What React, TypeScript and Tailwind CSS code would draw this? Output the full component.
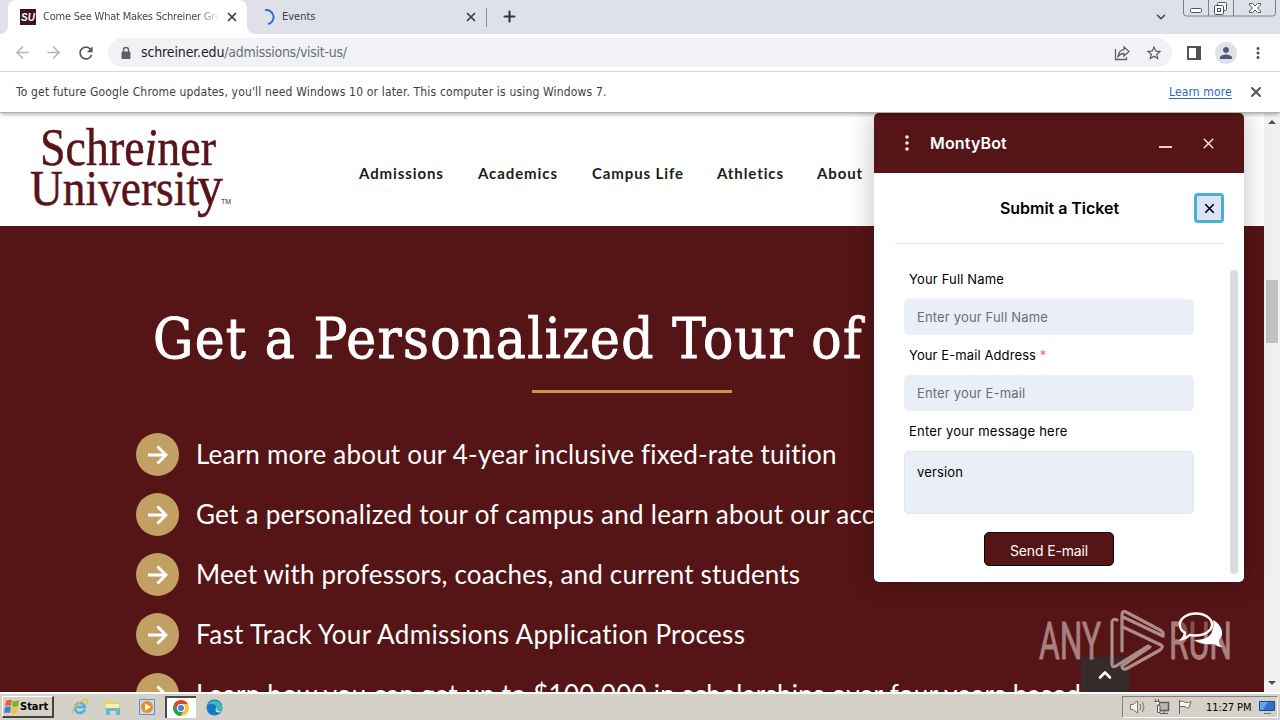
import { ArrowLeft, ArrowRight, ChevronDown, ChevronUp, Plus, X } from 'lucide-react';
import { MdMoreVert, MdPerson, MdRefresh, MdStarBorder } from 'react-icons/md';

const NAV = [
  { label: 'Admissions', width: 'w-[85px]' },
  { label: 'Academics', width: 'w-[80px]' },
  { label: 'Campus Life', width: 'w-[91px]' },
  { label: 'Athletics', width: 'w-[66px]' },
  { label: 'About', width: 'w-[46px]' },
];

const ITEMS = [
  { text: 'Learn more about our 4-year inclusive fixed-rate tuition', spacing: 'tracking-[0.2px]' },
  { text: 'Get a personalized tour of campus and learn about our accredited programs', spacing: 'tracking-[0.28px]' },
  { text: 'Meet with professors, coaches, and current students', spacing: 'tracking-[0.18px]' },
  { text: 'Fast Track Your Admissions Application Process', spacing: 'tracking-[0.35px]' },
  { text: 'Learn how you can get up to $100,000 in scholarships over four years based', spacing: 'tracking-[0.28px]' },
];

function TabStrip() {
  return (
    <div className="flex h-[34px] shrink-0 bg-[#dee1e9]">
      <div className="w-2 bg-white">
        <div className="h-full w-2 rounded-br-lg bg-[#dee1e9]" />
      </div>
      <div className="flex w-[239px] items-center rounded-t-lg bg-white pl-3">
        <div className="flex h-4 w-4 items-center justify-center bg-[#43121a] font-['Liberation_Sans'] text-[10px] font-bold italic text-white">
          SU
        </div>
        <div className="ml-[7px] w-[176px] overflow-hidden whitespace-nowrap bg-gradient-to-r from-[#3c4043] from-88% to-transparent bg-clip-text text-[11px] tracking-[-0.21px] text-transparent">
          Come See What Makes Schreiner Great
        </div>
        <X size={14} strokeWidth={3} className="ml-1.5 text-[#3c4043]" />
      </div>
      <div className="w-2 bg-white">
        <div className="h-full w-2 rounded-bl-lg bg-[#dee1e9]" />
      </div>
      <div className="flex w-[231px] items-center pl-[5px]">
        <svg width="16" height="16" viewBox="0 0 16 16" fill="none">
          <path d="M5 1.2A7 7 0 1 1 8 15" stroke="#2f6fd0" strokeWidth="2" />
        </svg>
        <div className="ml-1.5 w-[182px] text-[11px] text-[#3c4043]">Events</div>
        <X size={14} strokeWidth={3} className="text-[#3c4043]" />
      </div>
      <div className="mt-2 h-[19px] w-px bg-[#8a8d94]" />
      <Plus size={17} strokeWidth={3} className="ml-3.5 mt-2 text-[#33363b]" />
      <div className="flex flex-1 items-start justify-end">
        <ChevronDown size={14} strokeWidth={2.8} className="mr-[15px] mt-2.5 text-[#45484c]" />
        <svg width="97" height="17" viewBox="0 0 97 17" fill="none" stroke="#7c8088">
          <path d="M.5 0v13q0 3 3 3h86q3 0 3-3V0M25.500 0v16M50.500 0v16" />
          <rect x="7.500" y="8.500" width="11" height="4" rx="1" fill="#fff" stroke="#50535a" />
          <rect x="34.500" y="2.500" width="9" height="8" rx="1" fill="#fff" stroke="#50535a" />
          <rect x="31.500" y="5.500" width="9" height="9" rx="1" fill="#fff" stroke="#50535a" />
          <rect x="34.500" y="8.500" width="3" height="3" stroke="#50535a" />
          <path d="M66.500 3.500h3l2.500 2.500 2.500-2.500h3v1.500l-3 3 3 3v1.500h-3L72 10l-2.500 2.500h-3V11l3-3-3-3z" fill="#fff" stroke="#50535a" />
        </svg>
      </div>
    </div>
  );
}

function Toolbar() {
  return (
    <div className="flex h-[38px] shrink-0 items-center border-b border-[#d5d7da] bg-white">
      <ArrowLeft size={19} className="ml-[13px] text-[#b4b5b7]" />
      <ArrowRight size={19} className="ml-3 text-[#b4b5b7]" />
      <MdRefresh size={20} className="ml-[13px] text-[#55585c]" />
      <div className="ml-3 flex h-[29px] flex-1 items-center rounded-full bg-[#f0f2f5]">
        <svg width="14" height="14" viewBox="0 0 14 14" className="ml-[11px]">
          <path d="M3 6h8v6.500H3z" fill="#5f6368" stroke="#5f6368" strokeLinejoin="round" />
          <path d="M4.500 6V4a2.500 2.500 0 0 1 5 0v2" fill="none" stroke="#5f6368" strokeWidth="1.400" />
        </svg>
        <div className="ml-2 text-[14px] tracking-[-0.27px] text-[#6b6f74]">
          <span className="tracking-[-0.13px] text-[#202124]">schreiner.edu</span>/admissions/visit-us/
        </div>
        <div className="flex-1" />
        <svg width="16" height="16" viewBox="0 0 16 16" fill="none" stroke="#5f6368" strokeWidth="1.300">
          <path d="M1.500 4v10.500h11V12" />
          <path d="M10 2l5 4.500-5 4.500V8.500C7 8.500 5.500 9.500 4 11.500 4.500 7.500 6.500 5 10 4.700z" />
        </svg>
        <MdStarBorder size={18} className="ml-[15px] mr-[9px] text-[#55585c]" />
      </div>
      <div className="ml-[15px] h-[14px] w-[14px] border-2 border-r-[5px] border-[#505357]" />
      <div className="ml-3.5 flex h-[22px] w-[22px] items-center justify-center rounded-full bg-[#dfe1e8]">
        <MdPerson size={18} className="text-[#4f5a78]" />
      </div>
      <MdMoreVert size={18} className="ml-3 mr-[13px] text-[#505357]" />
    </div>
  );
}

function UpdateNotice() {
  return (
    <div className="relative z-20 flex h-[41px] shrink-0 items-center border-b border-[#aeb0b2] bg-white pl-4 text-[12px] shadow-[0_3px_3px_-1px_rgba(0,0,0,0.25)]">
      <div className="flex-1 whitespace-nowrap tracking-[0.165px] text-[#3c4043]">
        To get future Google Chrome updates, you'll need Windows 10 or later. This computer is using Windows 7.
      </div>
      <div className="w-[63px] whitespace-nowrap tracking-[0.12px] text-[#2f66b8] underline underline-offset-2">Learn more</div>
      <X size={16} strokeWidth={2.8} className="ml-4 mr-4 text-[#505357]" />
    </div>
  );
}

function SiteHeader() {
  return (
    <header className="flex h-[113px] items-center bg-white">
      <svg
        width="210"
        height="113"
        viewBox="0 0 210 113"
        className="ml-[25px] font-['Liberation_Serif']"
        fill="#5a1419"
        stroke="#5a1419"
        strokeWidth="0.5"
      >
        <text x="15" y="52" fontSize="52" textLength="176" lengthAdjust="spacingAndGlyphs">
          Schre<tspan fontStyle="italic">i</tspan>ner
        </text>
        <text x="5" y="92" fontSize="50" textLength="169" lengthAdjust="spacingAndGlyphs">Universit</text>
        <text x="172" y="92" fontSize="58" textLength="26" lengthAdjust="spacingAndGlyphs">y</text>
        <text x="196" y="91" fontSize="7" fontFamily="Liberation Sans" strokeWidth="0">TM</text>
      </svg>
      <nav className="ml-[124px] mt-[7px] flex gap-[34px] font-['Lato'] text-[15px] font-bold tracking-[0.9px] text-[#1c1c1c]">
        {NAV.map((item) => (
          <a key={item.label} className={`${item.width} whitespace-nowrap`}>
            {item.label}
          </a>
        ))}
      </nav>
    </header>
  );
}

function TourSection() {
  return (
    <section className="h-[466px] overflow-hidden bg-[#551415] text-white">
      <h1 className="ml-[153px] mt-[73px] h-[80px] whitespace-nowrap font-['DejaVu_Serif_Condensed','DejaVu_Serif'] text-[56px] leading-[80px] tracking-[1.38px] [-webkit-text-stroke:0.9px_white]">
        Get a Personalized Tour of
      </h1>
      <div className="ml-[532px] mt-[11px] h-[3px] w-[200px] bg-[#c8944a]" />
      <ul className="ml-[136px] mt-10 flex flex-col gap-[17px]">
        {ITEMS.map((item) => (
          <li key={item.text} className="flex h-[43px] items-center gap-[17px]">
            <span className="flex h-[43px] w-[43px] shrink-0 items-center justify-center rounded-full bg-[#c2a063]">
              <svg width="20" height="20" viewBox="0 0 20 20" fill="none" stroke="#fff" strokeWidth="3">
                <path d="M0 10h18M9.500 1.500l8.500 8.500-8.500 8.500" />
              </svg>
            </span>
            <span className={`${item.spacing} whitespace-nowrap font-['Lato'] text-[26px]`}>{item.text}</span>
          </li>
        ))}
      </ul>
    </section>
  );
}

function PageScrollbar() {
  return (
    <div className="flex w-4 shrink-0 flex-col items-center bg-[#f1f1f1]">
      <svg width="8" height="4" viewBox="0 0 8 4" className="mt-[7px]">
        <path d="M0 4l4-4 4 4z" fill="#505050" />
      </svg>
      <div className="mt-[156px] h-[63px] w-3 bg-[#c1c1c1]" />
      <svg width="8" height="4" viewBox="0 0 8 4" className="mb-[7px] mt-auto">
        <path d="M0 0l4 4 4-4z" fill="#505050" />
      </svg>
    </div>
  );
}

function ChatPanel() {
  return (
    <div className="absolute left-[874px] top-0 z-20 h-[469px] w-[370px] overflow-hidden rounded-[5px] bg-white font-['Inter'] text-black shadow-[0_0_28px_rgba(0,0,0,0.25)]">
      <div className="flex h-[60px] items-center bg-[#551415] text-[#fbeeee]">
        <svg width="4" height="16" viewBox="0 0 4 16" fill="currentColor" className="ml-[31px]">
          <circle cx="2" cy="2" r="1.800" />
          <circle cx="2" cy="8" r="1.800" />
          <circle cx="2" cy="14" r="1.800" />
        </svg>
        <div className="ml-[21px] flex-1 text-[16px] font-semibold tracking-[0.15px] text-white">MontyBot</div>
        <div className="mt-2 h-0.5 w-[13px] bg-[#f3cfcb]" />
        <X size={17} className="ml-[28px] mr-[27px]" />
      </div>
      <div className="ml-[21px] mr-5 flex h-[71px] items-center border-b border-[#dfe1e4]">
        <div className="ml-[105px] flex-1 whitespace-nowrap text-[16px] font-semibold tracking-[-0.04px]">Submit a Ticket</div>
        <button className="flex h-[30px] w-[30px] items-center justify-center rounded-[4px] border-[3px] border-[#45b3c9] bg-[#dfe2f6]">
          <X size={15} strokeWidth={2.8} />
        </button>
      </div>
      <div className="flex">
        <form className="ml-[30px] mt-[25px] w-[290px] text-[13px] tracking-[0.16px]">
          <label className="block h-[30px] pl-[5px] leading-[21px]">Your Full Name</label>
          <div className="h-9 rounded-[5px] bg-[#e9eef7] pl-[13px] leading-9 text-[#686d7b]">Enter your Full Name</div>
          <label className="mt-[10px] block h-[30px] pl-[5px] leading-[21px] tracking-[0.1px]">
            Your E-mail Address <span className="text-[#ef6a6a]">*</span>
          </label>
          <div className="h-9 rounded-[5px] bg-[#e9eef7] pl-[13px] leading-9 text-[#686d7b]">Enter your E-mail</div>
          <label className="mt-[10px] block h-[30px] pl-[5px] leading-[21px] tracking-[0.22px]">Enter your message here</label>
          <div className="h-[63px] rounded-[5px] border border-[#e1e6e9] bg-[#e9eef7] pl-3 pt-[10px] leading-5">version</div>
          <button type="button" className="mx-auto mt-[18px] block h-[34px] w-[130px] rounded-[5px] border border-[#150304] bg-[#551415] pt-0.5 text-[14px] tracking-[-0.15px] text-white">
            Send E-mail
          </button>
        </form>
        <div className="ml-9 mt-[26px] h-[304px] w-2 rounded bg-[#d8dde2]" />
      </div>
    </div>
  );
}

function FloatingControls() {
  return (
    <>
      <div className="absolute left-[1081px] top-[544px] flex h-[35px] w-12 items-center justify-center bg-[#352b2b]">
        <ChevronUp size={20} strokeWidth={3.2} className="text-white" />
      </div>
      <svg width="200" height="70" viewBox="0 0 200 70" className="absolute left-[1035px] top-[492px] font-['Roboto']">
        <g fill="#a97f7f" stroke="#a97f7f" fontSize="52">
          <text x="4" y="54" textLength="62" lengthAdjust="spacingAndGlyphs">ANY</text>
          <text x="134" y="54" textLength="63" lengthAdjust="spacingAndGlyphs">RUN</text>
        </g>
        <g fill="none" stroke="#b08b8a" strokeWidth="3.200" strokeLinejoin="round" strokeLinecap="round">
          <path d="M82 15q-5-2-5 3v41q0 4 4 2l32-20" />
          <path d="M87 46V10q0-5 4-3l34 18q4 2 3 6L88 12" />
          <path d="M88 22l38 18q3 2-1 5L91 64q-4 1-4-3l28-19" />
        </g>
        <path d="M178 15c6 3 10 9 9 15-1 3-3 4-3 5 0 3 1 5 3 7-4 0-6-2-8-3-7 1-15 0-20-4 10 0 16-3 18-8 2-4 2-8 1-12z" fill="#fff" />
        <path
          d="M161 8.500c9 0 16 5 16 11s-7 11-16 11c-2 0-4 0-6-.6-2 2-5 3.600-8 4.100 2-2 3-4 2.800-6.200-3.300-2.200-5-5-5-8.300 0-6 7.200-11 16.200-11z"
          fill="#551415"
          fillOpacity=".4"
          stroke="#fff"
          strokeWidth="2.400"
        />
      </svg>
    </>
  );
}

function Taskbar() {
  return (
    <footer className="z-30 flex h-7 shrink-0 items-center border-t-2 border-white bg-[#d5d1c8] text-black">
      <div className="ml-0.5 flex h-[22px] w-[52px] items-center border-b-2 border-r-2 border-b-[#46433f] border-r-[#46433f] border-l border-t border-l-white border-t-white">
        <svg width="16" height="16" viewBox="0 0 16 16" className="ml-px shrink-0">
          <path d="M2 2q3-2 6-1L7 7Q4 6 1 7z" fill="#e5652b" />
          <path d="M9 2q3 1 6-1l-1 6q-3 2-6 0z" fill="#70b52b" />
          <path d="M1 8q3-1 6 0l-1 6q-3-1-6 0z" fill="#3a85d2" />
          <path d="M8 8q3 2 6 0l-1 6q-3 2-6 0z" fill="#efc530" />
        </svg>
        <span className="pt-0.5 text-[11px] font-bold">Start</span>
      </div>
      <svg width="18" height="18" viewBox="0 0 18 18" className="ml-[17px]" fill="none">
        <path d="M14 11.500q-2 3.500-5.500 3.500A5 5 0 1 1 14 9H5" stroke="#4db0e2" strokeWidth="2.600" />
        <path d="M2 15Q0 12 7 6t9-4-1 4" stroke="#e5bd3c" strokeWidth="1.400" />
      </svg>
      <svg width="18" height="18" viewBox="0 0 18 18" className="ml-[15px]">
        <path d="M1 2h6l1 2h8v9H1z" fill="#e7cd73" />
        <path d="M2 6h13v4H2z" fill="#f9efb2" />
        <path d="M2 10h14v7h-4v-4H6v4H2z" fill="#69b6d5" />
      </svg>
      <svg width="18" height="18" viewBox="0 0 18 18" className="ml-4">
        <path d="M1.500 1.500h15v15h-15z" fill="#c4dcf0" stroke="#5795cc" />
        <circle cx="9" cy="9" r="6" fill="#ef8c1e" />
        <path d="M7 5.500l6 3.500-6 3.500z" fill="#fff" />
      </svg>
      <div className="ml-[9px] flex h-[22px] w-[31px] items-center justify-center border-l-2 border-t-2 border-l-[#4c4a46] border-t-[#4c4a46] bg-white">
        <svg width="16" height="16" viewBox="0 0 16 16" className="mr-0.5">
          <circle cx="8" cy="8" r="8" fill="#f5c62f" />
          <path d="M1.100 4A8 8 0 0 1 14.900 4H8L4.500 10z" fill="#dc4437" />
          <path d="M1.100 4A8 8 0 0 0 7.500 16l3.500-6H4.500z" fill="#2f9d57" />
          <circle cx="8" cy="8" r="4" fill="#fff" />
          <circle cx="8" cy="8" r="3" fill="#3d7ee8" />
        </svg>
      </div>
      <svg width="17" height="17" viewBox="0 0 17 17" className="ml-2.5">
        <circle cx="8.500" cy="8.500" r="8" fill="#1679c5" />
        <path d="M1 7A8 8 0 0 1 16.500 9q0 3-4 3-3 0-2-2Q11 6 7 5 3 4 1 7z" fill="#36c1b4" />
        <path d="M10.500 8q.5 2 0 3 1 2 5.500 1-1.500 1.500-4 1.500-4-1-1.500-5.500z" fill="#e4f3f6" />
      </svg>
      <div className="ml-auto mr-0.5 flex h-[22px] w-[156px] items-center border border-b-white border-l-[#858178] border-r-white border-t-[#858178]">
        <svg width="17" height="16" viewBox="0 0 17 16" className="ml-1.5 shrink-0" fill="#f6f5f2" stroke="#77756f">
          <path d="M1.500 5.500H4L8.500 2v12L4 10.500H1.500z" />
          <path d="M11 5q2 3 0 6M13.500 3q3 5 0 10" fill="none" />
        </svg>
        <svg width="17" height="16" viewBox="0 0 17 16" className="ml-[7px] shrink-0" fill="#f6f5f2" stroke="#5e5c57">
          <path d="M5.500 3.500h10v8h-10z" fill="#b9b7b1" strokeWidth="1.500" />
          <path d="M7 14.500h8M11 12v2" />
          <path d="M1.500 2.500h5v4h-2v7h2.500v-7M2.500 0v2M5.500 0v2" />
        </svg>
        <svg width="16" height="16" viewBox="0 0 16 16" className="ml-[7px] shrink-0" fill="#f6f5f2" stroke="#69665f">
          <path d="M2.500 1v14M3 2.500c4-1 4 1 6 1s3 0 5-1l-2 6c-2 1-3 0-4-1H3" />
        </svg>
        <span className="ml-[13px] w-[47px] whitespace-nowrap pt-0.5 text-[11px] tracking-[-0.1px]">11:27 PM</span>
        <svg width="16" height="15" viewBox="0 0 16 15" className="ml-1.5 shrink-0">
          <path d="M.5 1.500h15v9H.5z" fill="#2e72cc" stroke="#1e4988" />
          <path d="M1 2h8L4 10H1z" fill="#63a5ea" />
          <path d="M5 13.500h7" stroke="#6e7379" />
        </svg>
      </div>
    </footer>
  );
}

export default function App() {
  return (
    <div className="flex h-[720px] w-[1280px] flex-col overflow-hidden bg-white font-['DejaVu_Sans_Condensed','DejaVu_Sans',sans-serif]">
      <TabStrip />
      <Toolbar />
      <UpdateNotice />
      <div className="relative z-10 flex h-[579px] shrink-0">
        <main className="w-[1264px] overflow-hidden">
          <SiteHeader />
          <TourSection />
        </main>
        <PageScrollbar />
        <FloatingControls />
        <ChatPanel />
      </div>
      <Taskbar />
    </div>
  );
}
